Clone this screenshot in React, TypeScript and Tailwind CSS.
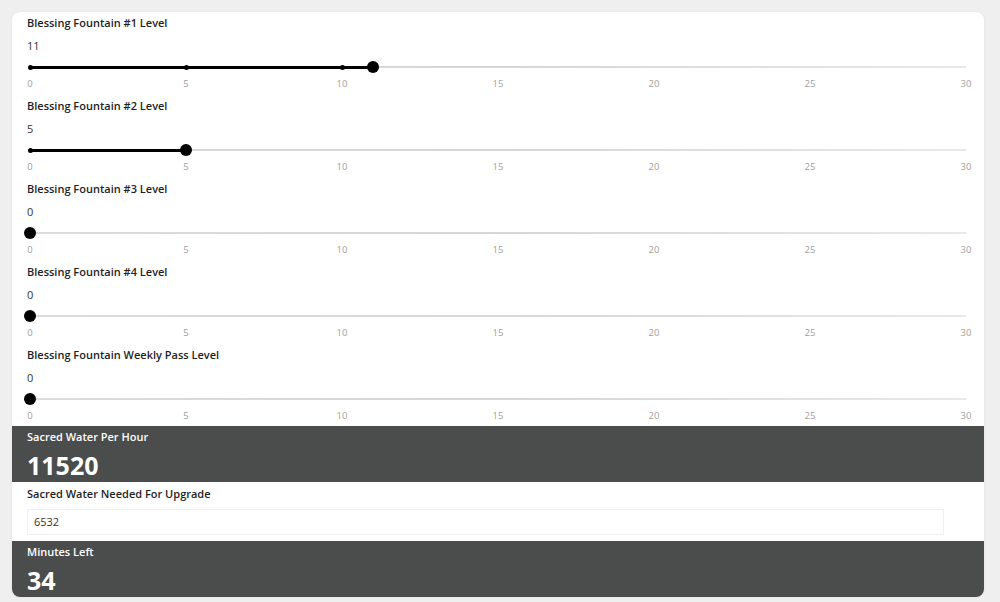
import React from 'react';

const levels = [
  { label: 'Blessing Fountain #1 Level', value: 11 },
  { label: 'Blessing Fountain #2 Level', value: 5 },
  { label: 'Blessing Fountain #3 Level', value: 0 },
  { label: 'Blessing Fountain #4 Level', value: 0 },
  { label: 'Blessing Fountain Weekly Pass Level', value: 0 },
];

const ticks = [0, 5, 10, 15, 20, 25, 30];
const MAX = 30;

function LevelSlider({ label, value }: { label: string; value: number }) {
  const pct = (value / MAX) * 100;
  return (
    <div className="flex flex-col pt-[3px] pb-[5px]">
      <div className="px-[15px] text-[11px] leading-4 font-semibold text-[#1f1f1f]">{label}</div>
      <div className="px-[15px] mt-[7px] text-[11px] leading-4 text-[#333]">{value}</div>
      <div className="mx-[18px] mt-[7px] relative h-3 flex items-center">
        <div className="w-full h-[2px] bg-gradient-to-r from-[#dcdcdc] via-[#d6d6d6] to-[#e8e8e8]" />
        <div className="absolute left-0 top-[4.5px] h-[3px] bg-black" style={{ width: `${pct}%` }} />
        <div className="absolute inset-x-[-2.5px] top-[3.5px] flex justify-between">
          {ticks.map((t) => (
            <div key={t} className={`w-[5px] h-[5px] rounded-full ${t <= value ? 'bg-black' : 'bg-transparent'}`} />
          ))}
        </div>
        <div className="absolute top-0 w-3 h-3 -ml-[6px] rounded-full bg-black" style={{ left: `${pct}%` }} />
      </div>
      <div className="mx-[12px] mt-[5px] flex justify-between">
        {ticks.map((t) => (
          <span key={t} className="w-3 text-center text-[9.5px] leading-3 text-[#a0a0a0]">
            {t}
          </span>
        ))}
      </div>
    </div>
  );
}

function StatBar({ label, value, className = '' }: { label: string; value: string; className?: string }) {
  return (
    <div className={`bg-[#4b4c4c] px-[15px] pt-[3px] h-[56px] flex flex-col ${className}`}>
      <div className="text-[11px] leading-4 font-semibold text-white">{label}</div>
      <div className="mt-[6px] text-[25px] leading-[28px] font-bold text-white">{value}</div>
    </div>
  );
}

export default function App() {
  return (
    <div
      className="min-h-[602px] bg-[#efefef] pt-3 pb-[5px] pl-3 pr-4"
      style={{ fontFamily: '"Open Sans", "Liberation Sans", sans-serif' }}
    >
      <div className="bg-white rounded-lg shadow-[0_0_3px_rgba(0,0,0,0.06)] flex flex-col">
        {levels.map((l) => (
          <LevelSlider key={l.label} label={l.label} value={l.value} />
        ))}

        <StatBar label="Sacred Water Per Hour" value="11520" className="-mt-px" />

        <div className="px-[15px] pt-1 h-[59px] flex flex-col">
          <div className="text-[11px] leading-4 font-semibold text-[#1f1f1f]">Sacred Water Needed For Upgrade</div>
          <div className="mt-[7px] mr-[25px] h-[26px] border border-[#f0f0f0] flex items-center px-[6px] text-[11px] text-[#333]">
            6532
          </div>
        </div>

        <StatBar label="Minutes Left" value="34" className="rounded-b-lg" />
      </div>
    </div>
  );
}
